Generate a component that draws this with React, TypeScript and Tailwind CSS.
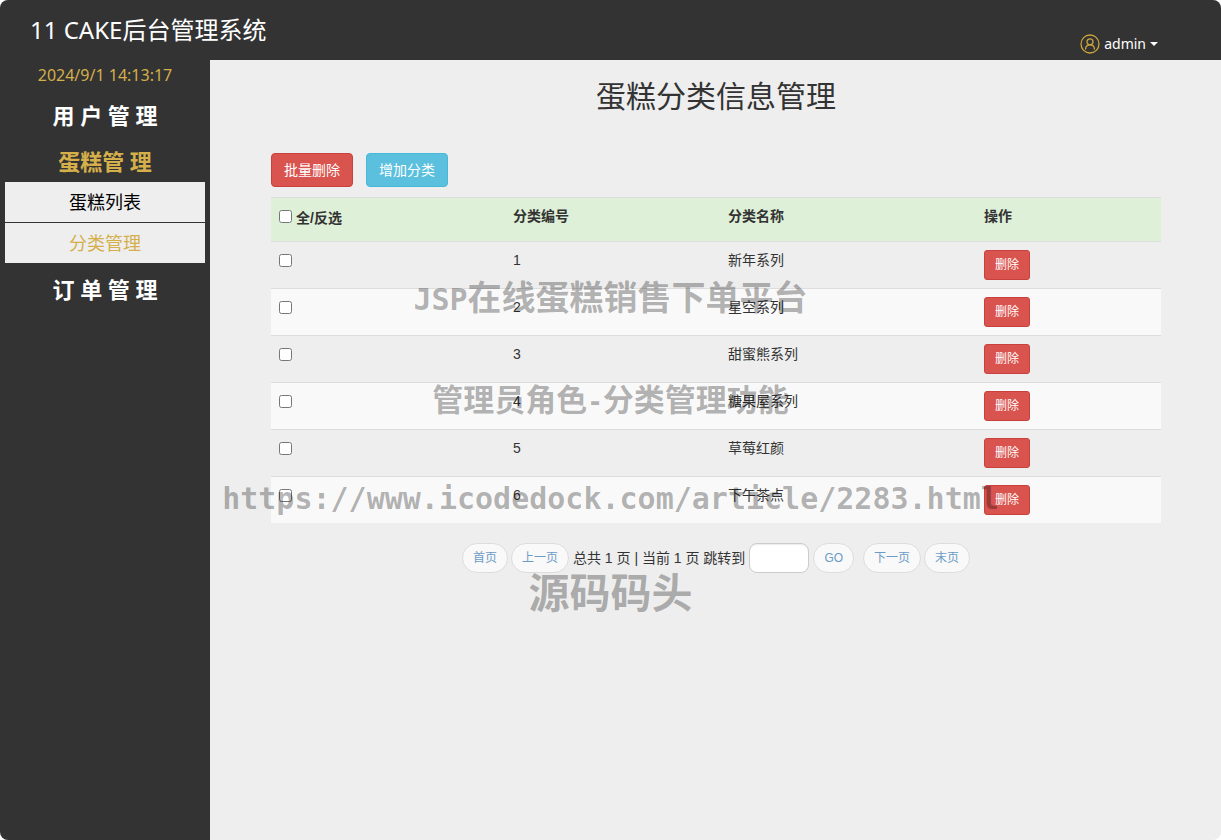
import { useState } from "react";

const categories = [
  { id: 1, name: "新年系列" },
  { id: 2, name: "星空系列" },
  { id: 3, name: "甜蜜熊系列" },
  { id: 4, name: "糖果屋系列" },
  { id: 5, name: "草莓红颜" },
  { id: 6, name: "下午茶点" },
];

const pill =
  "h-[30px] rounded-full border border-[#ddd] bg-[#f9f9f9] px-[10px] text-xs leading-[18px] text-[#6b9bc6]";

function UserIcon() {
  return (
    <svg width="20" height="20" viewBox="0 0 20 20" fill="none" stroke="#c9a43c" strokeWidth="1.3" aria-hidden="true">
      <circle cx="10" cy="10" r="9" />
      <circle cx="10" cy="7.8" r="3" />
      <path d="M5.6 15c0-2.6 1.8-4.2 4.4-4.2s4.4 1.6 4.4 4.2" strokeLinecap="round" />
    </svg>
  );
}

function Header() {
  return (
    <header className="flex h-[60px] items-start justify-between bg-[#333] pr-[63px] pl-[30px] text-white">
      <h1 className="pt-3 text-2xl leading-9">11 CAKE后台管理系统</h1>
      <button type="button" className="mt-[34px] flex items-center gap-1 text-sm leading-[18px]">
        <UserIcon />
        <span className="pb-px">admin</span>
        <svg width="8" height="4" viewBox="0 0 8 4" fill="currentColor" aria-hidden="true">
          <path d="M0 0h8L4 4z" />
        </svg>
      </button>
    </header>
  );
}

function Sidebar() {
  return (
    <nav className="w-[210px] shrink-0 bg-[#333] text-center text-white">
      <p className="h-[30px] text-base leading-[30px] text-[#d4af4a]">2024/9/1 14:13:17</p>
      <a href="#users" className="mt-1 block text-[22px] leading-[42px] font-bold">用 户 管 理</a>
      <a href="#cakes" className="mt-1 block text-[22px] leading-[42px] font-bold text-[#d4af4a]">蛋糕管 理</a>
      <ul className="mx-[5px] space-y-px text-lg leading-[40px]">
        <li><a href="#cake-list" className="block bg-[#eee] text-black">蛋糕列表</a></li>
        <li><a href="#categories" className="block bg-[#eee] text-[#d4af4a]">分类管理</a></li>
      </ul>
      <a href="#orders" className="mt-1 block text-[22px] leading-[44px] font-bold">订 单 管 理</a>
    </nav>
  );
}

function CategoryTable() {
  const [picked, setPicked] = useState<number[]>([]);
  const toggle = (id: number) =>
    setPicked((p) => (p.includes(id) ? p.filter((x) => x !== id) : [...p, id]));
  const all = picked.length === categories.length;
  return (
    <table className="mt-[10px] w-full table-fixed text-left">
      <colgroup>
        <col className="w-[234px]" />
        <col className="w-[215px]" />
        <col className="w-[256px]" />
        <col />
      </colgroup>
      <thead>
        <tr className="h-[44px] border-t border-[#ddd] bg-[#dff0d8] align-top">
          <th className="p-2">
            <label className="flex items-center gap-1 leading-6">
              <input
                type="checkbox"
                className="mb-1 size-[13px]"
                checked={all}
                onChange={() => setPicked(all ? [] : categories.map((c) => c.id))}
              />
              全/反选
            </label>
          </th>
          <th className="p-2">分类编号</th>
          <th className="p-2">分类名称</th>
          <th className="p-2">操作</th>
        </tr>
      </thead>
      <tbody>
        {categories.map((c) => (
          <tr key={c.id} className="border-t border-[#ddd] align-top even:bg-[#f9f9f9]">
            <td className="p-2">
              <input
                type="checkbox"
                aria-label={c.name}
                className="mt-1 block size-[13px]"
                checked={picked.includes(c.id)}
                onChange={() => toggle(c.id)}
              />
            </td>
            <td className="p-2">{c.id}</td>
            <td className="p-2">{c.name}</td>
            <td className="p-2">
              <button type="button" className="block h-[30px] rounded-[3px] border border-[#c9413c] bg-[#d9534f] px-[10px] text-xs leading-[18px] text-white">
                删除
              </button>
            </td>
          </tr>
        ))}
      </tbody>
    </table>
  );
}

function Pagination() {
  return (
    <div className="mt-5 flex items-center justify-center">
      <button type="button" className={pill}>首页</button>
      <button type="button" className={`${pill} ml-[3px]`}>上一页</button>
      <label className="ml-1 flex items-center gap-1">
        总共 1 页 | 当前 1 页 跳转到
        <input type="text" className="h-[30px] w-[60px] rounded-lg border border-[#ccc] bg-white px-2 shadow-[inset_0_1px_1px_rgba(0,0,0,0.075)]" />
      </label>
      <button type="button" className={`${pill} ml-1`}>GO</button>
      <button type="button" className={`${pill} ml-[9px]`}>下一页</button>
      <button type="button" className={`${pill} ml-[3px]`}>末页</button>
    </div>
  );
}

function Watermark() {
  return (
    <div className="pointer-events-none absolute inset-x-0 top-[268px] flex flex-col items-center text-center font-['Noto_Sans_CJK_SC',sans-serif] font-bold whitespace-nowrap text-black/30">
      <p className="h-14 text-[34px] leading-[56px]">
        <span className="font-['DejaVu_Sans_Mono',monospace] text-[30px] leading-none">JSP</span>在线蛋糕销售下单平台
      </p>
      <p className="mt-[46px] h-14 text-[31px] leading-[56px]">
        管理员角色<span className="font-['DejaVu_Sans_Mono',monospace] text-[26px] leading-none">-</span>分类管理功能
      </p>
      <p className="mt-[45px] h-14 font-['DejaVu_Sans_Mono',monospace] text-[30px] leading-[56px]">
        https://www.icodedock.com/article/2283.html
      </p>
      <p className="mt-[35px] h-14 text-[41px] leading-[56px]">源码码头</p>
    </div>
  );
}

export default function App() {
  return (
    <div className="relative flex min-h-screen flex-col overflow-hidden rounded-lg bg-[#eee] font-['Noto_Sans','Noto_Sans_CJK_SC',sans-serif]">
      <Header />
      <div className="flex flex-1">
        <Sidebar />
        <main className="min-w-0 flex-1 pt-5 pr-[60px] pl-[61px] font-['Liberation_Sans','Noto_Sans_CJK_SC',sans-serif] text-sm leading-5 text-[#333]">
          <h2 className="text-center text-[30px] leading-[33px]">蛋糕分类信息管理</h2>
          <div className="mt-10 flex gap-[13px]">
            <button type="button" className="h-[34px] rounded border border-[#c9413c] bg-[#d9534f] px-3 text-white">批量删除</button>
            <button type="button" className="h-[34px] rounded border border-[#46b8da] bg-[#5bc0de] px-3 text-white">增加分类</button>
          </div>
          <CategoryTable />
          <Pagination />
        </main>
      </div>
      <Watermark />
    </div>
  );
}
